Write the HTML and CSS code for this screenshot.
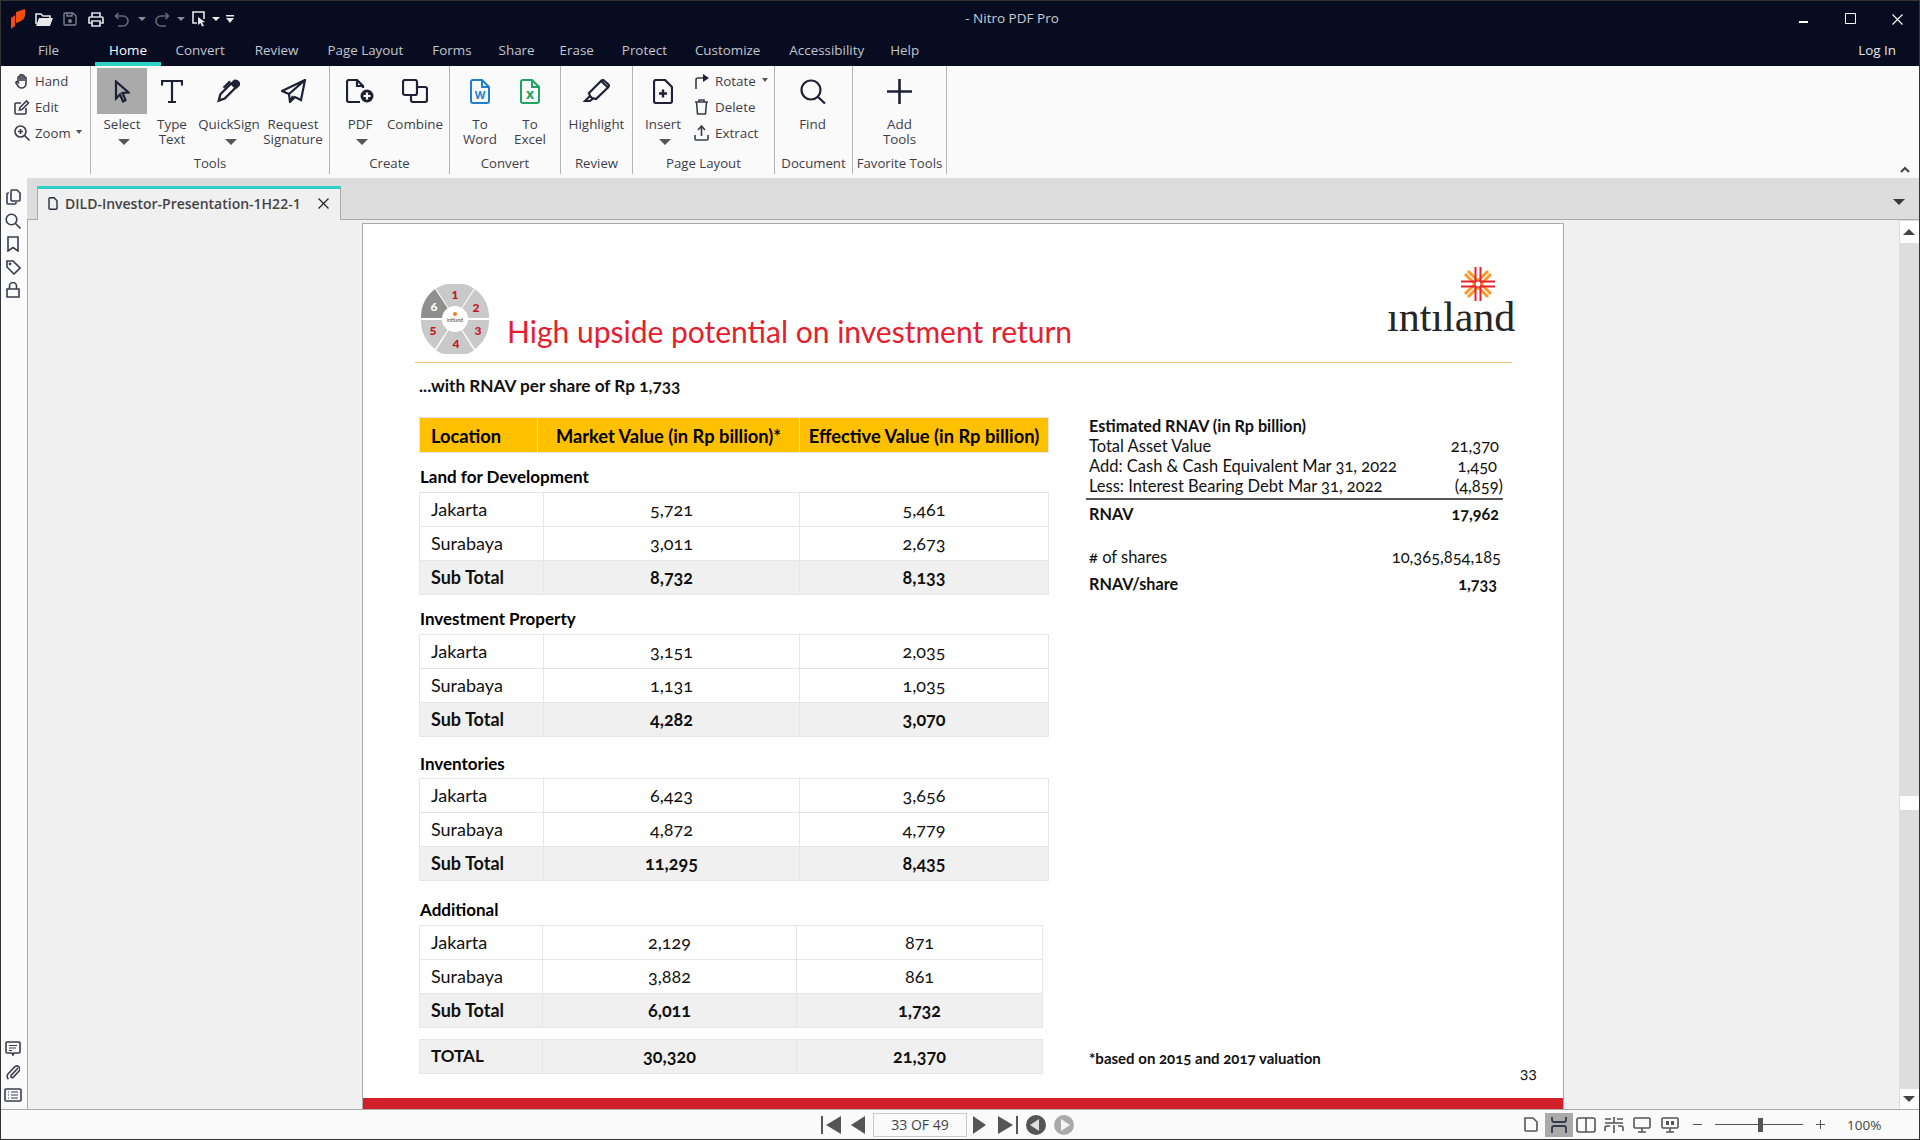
FILE: index.html
```html
<!DOCTYPE html>
<html lang="en">
<head>
<meta charset="utf-8">
<title>Nitro PDF Pro</title>
<link rel="stylesheet" href="styles.css">
</head>
<body>
<div class="app">
  <header class="titlebar">
    <div class="qat">
      <svg width="15" height="20" viewBox="0 0 15 20"><path fill="#f04e12" d="M0 9l4-3v11l-4 3zM5 3l9-3c1 6 0 11-6 13l-3 1z"/></svg>
      <svg width="18" height="14" viewBox="0 0 18 14" fill="none"><path d="M1 12V2h5l2 2h7v2" stroke="#e8e8ea" stroke-width="1.6"/><path d="M4 6h14l-3 8H1z" fill="#e8e8ea"/></svg>
      <svg width="14" height="14" viewBox="0 0 14 14" fill="none" stroke="#7c7f8a" stroke-width="1.4"><path d="M1 2a1 1 0 0 1 1-1h8l3 3v8a1 1 0 0 1-1 1H2a1 1 0 0 1-1-1z"/><path d="M4 1v3h5V1"/><circle cx="7" cy="9" r="1.2" fill="#7c7f8a"/></svg>
      <svg width="16" height="15" viewBox="0 0 16 15" fill="none" stroke="#dcdce0" stroke-width="1.7"><path d="M4 5V1h8v4M4 11H1V6a1 1 0 0 1 1-1h12a1 1 0 0 1 1 1v5h-3"/><path d="M4 9h8v5H4z"/></svg>
      <svg width="15" height="15" viewBox="0 0 15 15" fill="none" stroke="#666a76" stroke-width="1.6"><path d="M4 14h5a5 5 0 0 0 0-10H2M4.500 1L1.500 4l3 3"/></svg>
      <span class="caret caret-gray"></span>
      <svg width="15" height="15" viewBox="0 0 15 15" fill="none" stroke="#666a76" stroke-width="1.6"><path d="M11 14H6A5 5 0 0 1 6 4h7M10.500 1l3 3-3 3"/></svg>
      <span class="caret caret-gray"></span>
      <svg width="14" height="16" viewBox="0 0 14 16" fill="none"><path d="M12 8V1H1v11h4" stroke="#e8e8ea" stroke-width="1.6"/><path d="M6 6l7 5-3 .5 2 3.500-2 .5-1.500-3.500L6 14z" fill="#e8e8ea"/></svg>
      <span class="caret caret-white"></span>
      <svg width="8" height="8" viewBox="0 0 8 8"><path d="M0 0h8v1.500H0zM0 3h8L4 8z" fill="#e8e8ea"/></svg>
    </div>
    <div class="app-title">- Nitro PDF Pro</div>
    <div class="winctl">
      <svg width="9" height="3" viewBox="0 0 9 3"><path d="M0 1h9v2H0z" fill="#fff"/></svg>
      <svg width="12" height="12" viewBox="0 0 12 12" fill="none"><path d="M.5.500h10v10H.5z" stroke="#fff"/></svg>
      <svg width="11" height="11" viewBox="0 0 11 11" fill="none"><path d="M.5.500l10 10M10.500.500l-10 10" stroke="#fff" stroke-width="1.100"/></svg>
    </div>
  </header>

  <nav class="menubar">
    <a class="menu menu-file">File</a>
    <a class="menu menu-on">Home</a>
    <a class="menu">Convert</a>
    <a class="menu">Review</a>
    <a class="menu">Page Layout</a>
    <a class="menu">Forms</a>
    <a class="menu">Share</a>
    <a class="menu">Erase</a>
    <a class="menu">Protect</a>
    <a class="menu">Customize</a>
    <a class="menu">Accessibility</a>
    <a class="menu">Help</a>
    <a class="menu menu-login">Log In</a>
  </nav>

  <section class="ribbon">
    <div class="group group-nav">
      <div class="small"><svg width="16" height="16" viewBox="0 0 16 16" class="ic ic-thin"><path d="M4 9V4.500a1 1 0 0 1 2 0V8M6 8V2.500a1 1 0 0 1 2 0V8M8 8V3a1 1 0 0 1 2 0v5M10 8V5a1 1 0 0 1 2 0v5.500c0 2.500-2 4.500-4.500 4.500-2.300 0-3.500-1.500-4.500-3.500L2 10c-.5-1 1-2 1.800-1L5 10.500"/></svg><span>Hand</span></div>
      <div class="small"><svg width="16" height="16" viewBox="0 0 16 16" class="ic ic-thin"><path d="M12 9v5a1 1 0 0 1-1 1H2a1 1 0 0 1-1-1V5a1 1 0 0 1 1-1h5"/><path d="M6 8.500L12.500 2l2 2L8 10.500l-2.500.500z"/></svg><span>Edit</span></div>
      <div class="small"><svg width="16" height="16" viewBox="0 0 16 16" class="ic ic-thin"><circle cx="6.500" cy="6.500" r="5.500"/><path d="M10.500 10.500l5 5M6.500 4v5M4 6.500h5"/></svg><span>Zoom</span><span class="caret caret-dark caret-zoom"></span></div>
    </div>

    <div class="group group-tools">
      <div class="tools">
        <div class="tool w50 tool-on"><div class="tool-ic"><svg width="16" height="23" viewBox="0 0 16 23" class="ic"><path d="M2 1.500l12.500 11-6 .5 3 7-2.500 1.500-3-7L2 18.500z"/></svg></div><div class="lbl">Select</div><span class="caret caret-big"></span></div>
        <div class="tool w50"><div class="tool-ic"><svg width="22" height="23" viewBox="0 0 22 23" class="ic"><path d="M1 5.500V1h20v4.500M11 1v21M7 22h8"/></svg></div><div class="lbl">Type<br>Text</div></div>
        <div class="tool w64"><div class="tool-ic"><svg width="28" height="26" viewBox="0 0 26 24" class="ic"><path d="M5 15L15 5l4 4L9 19l-5.500 2z"/><path d="M14 3L8 9"/><path d="M17 3.500a3 3 0 0 1 5 3l-2 2-4-3z" fill="#1e2135"/></svg></div><div class="lbl">QuickSign</div><span class="caret caret-big"></span></div>
        <div class="tool w64"><div class="tool-ic"><svg width="25" height="24" viewBox="0 0 25 24" class="ic"><path d="M24 1L1 12l7 3 1 8 5-5 6 3zM24 1L8 15M9 23l3-6"/></svg></div><div class="lbl">Request<br>Signature</div></div>
      </div>
      <div class="group-lbl">Tools</div>
    </div>

    <div class="group group-create">
      <div class="tools">
        <div class="tool w60"><div class="tool-ic"><svg width="28" height="24" viewBox="0 0 28 24" class="ic"><path d="M17 9V7l-6-6H3a2 2 0 0 0-2 2v18a2 2 0 0 0 2 2h11M11 1v6h6"/><circle cx="21" cy="17" r="6.500" fill="#1e2135" stroke="none"/><path d="M21 13.500v7M17.500 17h7" stroke="#fff"/></svg></div><div class="lbl">PDF</div><span class="caret caret-big"></span></div>
        <div class="tool w50"><div class="tool-ic"><svg width="26" height="24" viewBox="0 0 26 24" class="ic"><path d="M3 1h10a2 2 0 0 1 2 2v5h8a2 2 0 0 1 2 2v11a2 2 0 0 1-2 2H11a2 2 0 0 1-2-2v-5H3a2 2 0 0 1-2-2V3a2 2 0 0 1 2-2zM15 8v6a2 2 0 0 1-2 2H9"/></svg></div><div class="lbl">Combine</div></div>
      </div>
      <div class="group-lbl">Create</div>
    </div>

    <div class="group group-convert">
      <div class="tools">
        <div class="tool w50"><div class="tool-ic"><svg width="20" height="25" viewBox="0 0 20 25" fill="none"><path d="M12 1H3a2 2 0 0 0-2 2v19a2 2 0 0 0 2 2h14a2 2 0 0 0 2-2V8zM12 1v7h7" stroke="#1d7fd0" stroke-width="2"/><text x="10" y="20" class="doc-letter doc-word">W</text></svg></div><div class="lbl">To<br>Word</div></div>
        <div class="tool w50"><div class="tool-ic"><svg width="20" height="25" viewBox="0 0 20 25" fill="none"><path d="M12 1H3a2 2 0 0 0-2 2v19a2 2 0 0 0 2 2h14a2 2 0 0 0 2-2V8zM12 1v7h7" stroke="#1ea362" stroke-width="2"/><text x="10" y="20" class="doc-letter doc-excel">x</text></svg></div><div class="lbl">To<br>Excel</div></div>
      </div>
      <div class="group-lbl">Convert</div>
    </div>

    <div class="group group-review">
      <div class="tools">
        <div class="tool wfull"><div class="tool-ic"><svg width="27" height="24" viewBox="0 0 27 24" class="ic"><path d="M6 14L18 2a2.500 2.500 0 0 1 3.500 0L25 5a2.500 2.500 0 0 1 0 3.500L13 20l-4-1-2-2z"/><path d="M7 17l-5 5h5l3-2.500"/><path d="M18 2l7 6.500"/></svg></div><div class="lbl">Highlight</div></div>
      </div>
      <div class="group-lbl">Review</div>
    </div>

    <div class="group group-layout">
      <div class="tools">
        <div class="tool w50"><div class="tool-ic"><svg width="20" height="25" viewBox="0 0 20 25" class="ic"><path d="M12 1H3a2 2 0 0 0-2 2v19a2 2 0 0 0 2 2h14a2 2 0 0 0 2-2V8z"/><path d="M10 10.500v8M6 14.500h8" stroke-width="2.400"/></svg></div><div class="lbl">Insert</div><span class="caret caret-big"></span></div>
        <div class="small-col">
          <div class="small"><svg width="15" height="15" viewBox="0 0 15 15" class="ic ic-thin"><path d="M2 15V6a2 2 0 0 1 2-2h6"/><path d="M9 0l6 4-6 4z" fill="#1e2135" stroke="none"/></svg><span>Rotate</span><span class="caret caret-dark caret-rot"></span></div>
          <div class="small"><svg width="15" height="16" viewBox="0 0 15 16" class="ic ic-thin"><path d="M1 3h13M5 3V1h5v2M2.500 3l1 12h8l1-12"/></svg><span>Delete</span></div>
          <div class="small"><svg width="15" height="16" viewBox="0 0 15 16" class="ic ic-thin"><path d="M7.500 11V2M4 5l3.500-4L11 5M1 10v4a1 1 0 0 0 1 1h11a1 1 0 0 0 1-1v-4"/></svg><span>Extract</span></div>
        </div>
      </div>
      <div class="group-lbl">Page Layout</div>
    </div>

    <div class="group group-doc">
      <div class="tools">
        <div class="tool wfull tool-find"><div class="tool-ic"><svg width="26" height="25" viewBox="0 0 26 25" class="ic"><circle cx="11" cy="11" r="9.500"/><path d="M18 18l7 6.500"/></svg></div><div class="lbl">Find</div></div>
      </div>
      <div class="group-lbl">Document</div>
    </div>

    <div class="group group-fav">
      <div class="tools">
        <div class="tool wfull"><div class="tool-ic"><svg width="25" height="25" viewBox="0 0 25 25" class="ic ic-thick"><path d="M12.500 0v25M0 12.500h25"/></svg></div><div class="lbl">Add<br>Tools</div></div>
      </div>
      <div class="group-lbl">Favorite Tools</div>
    </div>

    <svg class="collapse" width="10" height="7" viewBox="0 0 10 7" fill="none"><path d="M1 6l4-4 4 4" stroke="#444" stroke-width="2"/></svg>
  </section>

  <div class="workspace">
    <aside class="sidebar">
      <div class="side-top">
        <svg width="15" height="16" viewBox="0 0 15 16" class="ic ic-side"><path d="M5 11V2a1 1 0 0 1 1-1h5l3 3v7a1 1 0 0 1-1 1H6a1 1 0 0 1-1-1z"/><path d="M3 4H2a1 1 0 0 0-1 1v9a1 1 0 0 0 1 1h7a1 1 0 0 0 1-1v-1"/></svg>
        <svg width="16" height="16" viewBox="0 0 16 16" class="ic ic-side"><circle cx="6.500" cy="6.500" r="5.300"/><path d="M10.500 10.500l5 5"/></svg>
        <svg width="12" height="16" viewBox="0 0 12 16" class="ic ic-side"><path d="M1 1h10v14l-5-3.500L1 15z"/></svg>
        <svg width="15" height="15" viewBox="0 0 15 15" class="ic ic-side"><path d="M1 1h6l7 7-6 6-7-7z"/><circle cx="4" cy="4" r=".6"/></svg>
        <svg width="14" height="16" viewBox="0 0 14 16" class="ic ic-side"><path d="M1 7h12v8H1zM3.500 7V4a3.500 3.500 0 0 1 7 0v3"/></svg>
      </div>
      <div class="side-bottom">
        <svg width="16" height="15" viewBox="0 0 16 15" class="ic ic-side"><path d="M2 1h12a1 1 0 0 1 1 1v9a1 1 0 0 1-1 1H9l-1 2-1-2H2a1 1 0 0 1-1-1V2a1 1 0 0 1 1-1z"/><path d="M4 4.500h8M4 7h7M4 9.500h3" stroke-width="1.100"/></svg>
        <svg width="14" height="16" viewBox="0 0 14 16" class="ic ic-side"><path d="M12 4L5 11.500a1.500 1.500 0 0 0 2 2L13 7a3 3 0 0 0-4.500-4L2 10a3.500 3.500 0 0 0 .5 5"/></svg>
        <svg width="18" height="14" viewBox="0 0 18 14" class="ic ic-side"><path d="M2 1h14a1 1 0 0 1 1 1v10a1 1 0 0 1-1 1H2a1 1 0 0 1-1-1V2a1 1 0 0 1 1-1z"/><path d="M4 4h1M4 7h1M4 10h1M7 4h7M7 7h7M7 10h7" stroke-width="1.200"/></svg>
      </div>
    </aside>

    <div class="viewer">
      <div class="tabstrip">
        <div class="tab">
          <svg width="10" height="13" viewBox="0 0 10 13" class="ic ic-tab"><path d="M6 .700H2a1 1 0 0 0-1 1v9.600a1 1 0 0 0 1 1h6a1 1 0 0 0 1-1V3.700z"/></svg>
          <span class="tab-name">DILD-Investor-Presentation-1H22-1</span>
          <svg class="tab-x" width="11" height="11" viewBox="0 0 11 11" fill="none"><path d="M.5.500l10 10M10.500.500l-10 10" stroke="#222" stroke-width="1.200"/></svg>
        </div>
        <span class="caret caret-strip"></span>
      </div>

      <div class="docrow">
        <main class="docarea">
          <article class="page">
            <div class="page-head">
              <svg class="wheel" width="68" height="70" viewBox="0 0 68 70">
                <g fill="#c9c9c9">
                  <path d="M34 34L53 4.500A35 35 0 0 0 15 4.500z"/>
                  <path d="M35 34L54 5A36 36 0 0 1 68 34z"/>
                  <path d="M35 36H68A36 36 0 0 1 54 65z"/>
                  <path d="M34 36L53 66.500A36 36 0 0 1 15 66.500z"/>
                  <path d="M33 36H0A36 36 0 0 0 14 65z"/>
                  <path d="M33 34L14 5A36 36 0 0 0 0 34z" fill="#8f8f8f"/>
                </g>
                <circle cx="34" cy="35" r="13" fill="#fff"/>
                <circle cx="34" cy="30" r="2" fill="#f07c22"/>
                <text x="34" y="38" class="w-mini">intiland</text>
                <text x="34" y="15" class="w-num">1</text>
                <text x="55" y="28" class="w-num">2</text>
                <text x="57" y="51" class="w-num">3</text>
                <text x="35" y="64" class="w-num">4</text>
                <text x="12" y="51" class="w-num">5</text>
                <text x="13" y="27" class="w-num w-six">6</text>
              </svg>
              <h1 class="doc-title">High upside potential on investment return</h1>
              <div class="brand">
                <svg class="star" width="34" height="34" viewBox="0 0 34 34" fill="none">
                  <g stroke="#f79a2a" stroke-width="3">
                    <path d="M4 7l23 23M7 4l23 23M4 27L27 4M7 30L30 7"/>
                  </g>
                  <g stroke="#e32430" stroke-width="2">
                    <path d="M14.500 0v34M19.500 0v34M0 14.500h34M0 19.500h34"/>
                  </g>
                  <circle cx="17" cy="17" r="2.500" fill="#fff"/>
                </svg>
                <div class="brand-name">ıntıland</div>
              </div>
            </div>

            <p class="lead">...with RNAV per share of Rp 1,733</p>

            <div class="cols">
              <div class="col-left">
                <table class="tb tb-head">
                  <colgroup><col class="c-h1"><col class="c-h2"><col class="c-h3"></colgroup>
                  <tr><th class="th-loc">Location</th><th>Market Value (in Rp billion)*</th><th>Effective Value (in Rp billion)</th></tr>
                </table>

                <div class="sect sect-a">Land for Development</div>
                <table class="tb">
                  <colgroup><col class="c-a1"><col class="c-a2"><col class="c-a3"></colgroup>
                  <tr><td>Jakarta</td><td>5,721</td><td>5,461</td></tr>
                  <tr><td>Surabaya</td><td>3,011</td><td>2,673</td></tr>
                  <tr class="sub"><td>Sub Total</td><td>8,732</td><td>8,133</td></tr>
                </table>

                <div class="sect sect-a">Investment Property</div>
                <table class="tb">
                  <colgroup><col class="c-a1"><col class="c-a2"><col class="c-a3"></colgroup>
                  <tr><td>Jakarta</td><td>3,151</td><td>2,035</td></tr>
                  <tr><td>Surabaya</td><td>1,131</td><td>1,035</td></tr>
                  <tr class="sub"><td>Sub Total</td><td>4,282</td><td>3,070</td></tr>
                </table>

                <div class="sect sect-b">Inventories</div>
                <table class="tb">
                  <colgroup><col class="c-a1"><col class="c-a2"><col class="c-a3"></colgroup>
                  <tr><td>Jakarta</td><td>6,423</td><td>3,656</td></tr>
                  <tr><td>Surabaya</td><td>4,872</td><td>4,779</td></tr>
                  <tr class="sub"><td>Sub Total</td><td>11,295</td><td>8,435</td></tr>
                </table>

                <div class="sect sect-c">Additional</div>
                <table class="tb tb-narrow">
                  <colgroup><col class="c-b1"><col class="c-b2"><col class="c-b3"></colgroup>
                  <tr><td>Jakarta</td><td>2,129</td><td>871</td></tr>
                  <tr><td>Surabaya</td><td>3,882</td><td>861</td></tr>
                  <tr class="sub"><td>Sub Total</td><td>6,011</td><td>1,732</td></tr>
                </table>

                <table class="tb tb-narrow tb-total">
                  <colgroup><col class="c-b1"><col class="c-b2"><col class="c-b3"></colgroup>
                  <tr class="sub total-row"><td>TOTAL</td><td>30,320</td><td>21,370</td></tr>
                </table>
              </div>

              <div class="col-right">
                <div class="kv kv-b">Estimated RNAV (in Rp billion)</div>
                <div class="kv"><span>Total Asset Value</span><span>21,370</span></div>
                <div class="kv"><span>Add: Cash &amp; Cash Equivalent Mar 31, 2022</span><span class="v-in">1,450</span></div>
                <div class="kv"><span>Less: Interest Bearing Debt Mar 31, 2022</span><span class="v-out">(4,859)</span></div>
                <div class="rule"></div>
                <div class="kv kv-b"><span>RNAV</span><span>17,962</span></div>
                <div class="kv kv-shares"><span># of shares</span><span class="v-sh">10,365,854,185</span></div>
                <div class="kv kv-b kv-per"><span>RNAV/share</span><span class="v-in">1,733</span></div>
                <div class="footnote">*based on 2015 and 2017 valuation</div>
                <div class="pageno">33</div>
              </div>
            </div>

            <div class="redband"></div>
          </article>
        </main>

        <div class="scrollbar">
          <div class="sb-btn sb-up"><span class="sb-tri-up"></span></div>
          <div class="sb-thumb"></div>
          <div class="sb-btn sb-down"><span class="caret sb-tri-down"></span></div>
        </div>
      </div>
    </div>
  </div>

  <footer class="status">
    <div class="nav">
      <svg class="st" width="20" height="18" viewBox="0 0 20 18"><path d="M0 0h2v18H0zM20 0v18L5 9z" fill="#555"/></svg>
      <svg class="st st-prev" width="14" height="18" viewBox="0 0 14 18"><path d="M14 0v18L0 9z" fill="#555"/></svg>
      <div class="pagebox">33 OF 49</div>
      <svg class="st st-next" width="13" height="18" viewBox="0 0 13 18"><path d="M0 0v18L13 9z" fill="#555"/></svg>
      <svg class="st st-last" width="20" height="18" viewBox="0 0 20 18"><path d="M0 0v18L15 9zM18 0h2v18h-2z" fill="#555"/></svg>
      <svg class="st st-back" width="20" height="20" viewBox="0 0 20 20"><circle cx="10" cy="10" r="10" fill="#555"/><path d="M13 4v12L4 10z" fill="#ddd"/></svg>
      <svg class="st st-fwd" width="20" height="20" viewBox="0 0 20 20"><circle cx="10" cy="10" r="10" fill="#aaa"/><path d="M7 4v12l9-6z" fill="#f4f4f4"/></svg>
    </div>
    <div class="views">
      <svg class="v-ic" width="14" height="15" viewBox="0 0 14 15" fill="none"><path d="M1 1h8l4 4v8a1 1 0 0 1-1 1H2a1 1 0 0 1-1-1z" stroke="#555" stroke-width="1.600"/></svg>
      <div class="v-sel"><svg width="16" height="16" viewBox="0 0 16 16" fill="none"><path d="M1 0v3a2 2 0 0 0 2 2h10a2 2 0 0 0 2-2V0M1 16v-5a2 2 0 0 1 2-2h10a2 2 0 0 1 2 2v5" stroke="#333a4a" stroke-width="1.800"/></svg></div>
      <svg class="v-ic v-two" width="20" height="16" viewBox="0 0 20 16" fill="none"><path d="M3 1h14a2 2 0 0 1 2 2v10a2 2 0 0 1-2 2H3a2 2 0 0 1-2-2V3a2 2 0 0 1 2-2zM10 1v14" stroke="#555" stroke-width="1.600"/></svg>
      <svg class="v-ic v-four" width="20" height="16" viewBox="0 0 20 16" fill="none"><path d="M1 2h6M13 2h6M10 0v6M1 6h18M1 14v-3a2 2 0 0 1 2-2h3M19 14v-3a2 2 0 0 0-2-2h-3M10 8v8" stroke="#555" stroke-width="1.600"/></svg>
      <svg class="v-ic v-mon" width="18" height="16" viewBox="0 0 18 16" fill="none"><path d="M2 1h14a1 1 0 0 1 1 1v8a1 1 0 0 1-1 1H2a1 1 0 0 1-1-1V2a1 1 0 0 1 1-1zM9 11v4M5 15h8" stroke="#555" stroke-width="1.600"/></svg>
      <svg class="v-ic v-mon2" width="18" height="16" viewBox="0 0 18 16" fill="none"><path d="M2 1h14a1 1 0 0 1 1 1v8a1 1 0 0 1-1 1H2a1 1 0 0 1-1-1V2a1 1 0 0 1 1-1zM9 11v4M5 15h8" stroke="#555" stroke-width="1.600"/><path d="M5 4h3v4H5zM10 4h3v4h-3z" fill="#555"/></svg>
      <span class="zoom-minus"></span>
      <div class="slider"><span class="slider-thumb"></span></div>
      <svg class="zoom-plus" width="9" height="9" viewBox="0 0 9 9"><path d="M4 0h1v9H4zM0 4h9v1H0z" fill="#555"/></svg>
      <span class="pct">100%</span>
    </div>
  </footer>
</div>
</body>
</html>
```

FILE: styles.css
```css
* { box-sizing: border-box; }
html, body { margin: 0; padding: 0; }
body { width: 1920px; height: 1140px; overflow: hidden; font-family: "Open Sans", "Noto Sans", sans-serif; font-size: 13.400px; color: #3e3e48; }
.app { width: 1920px; height: 1140px; display: flex; flex-direction: column; background: #fafafa; border: 1px solid #333; }

.titlebar { height: 36px; flex: none; display: flex; align-items: center; background: #080c20; }
.qat { width: 239px; padding-left: 5px; display: grid; grid-template-columns: 24px 28px 24px 28px 22px 20px 20px 17px 20px 13px 15px; align-items: center; justify-items: center; flex: none; }
.app-title { flex: 1; text-align: center; color: #c8ccd4; font-size: 13.500px; line-height: 18px; padding-bottom: 3px; }
.winctl { width: 135px; flex: none; display: flex; align-items: center; padding-left: 15px; }
.winctl svg:nth-child(1) { margin-top: 5px; }
.winctl svg:nth-child(2) { margin-left: 37px; }
.winctl svg:nth-child(3) { margin-left: 35px; }

.caret { display: inline-block; width: 0; height: 0; border-left: 4px solid transparent; border-right: 4px solid transparent; border-top: 4px solid #888; }
.caret-gray { border-top-color: #8a8c94; }
.caret-white { border-top-color: #eee; }
.caret-dark { border-left-width: 3.500px; border-right-width: 3.500px; border-top-color: #555; }
.caret-big { margin: 7px 0 0 3px; border-left-width: 6px; border-right-width: 6px; border-top: 6px solid #555; }
.caret-zoom { margin-bottom: 3px; }
.caret-rot { margin-bottom: 3px; }

.menubar { height: 29px; flex: none; display: flex; background: #080c20; padding-left: 23px; }
.menu { height: 29px; padding: 3px 14.500px 0; line-height: 20px; color: #c2c6ce; font-size: 13.400px; white-space: nowrap; }
.menu-file { width: 49px; padding: 3px 0 0; text-align: center; margin-right: 22px; }
.menu-on { color: #fff; width: 66px; text-align: center; padding: 3px 0 0; border-bottom: 4px solid #2fd0c8; border-radius: 3px 3px 0 0; }
.menu:nth-child(3) { margin-right: 1px; }
.menu:nth-child(6) { margin-right: -2px; }
.menu:nth-child(7) { margin-right: -4px; }
.menu:nth-child(8) { margin-right: -1px; }
.menu:nth-child(9) { margin-right: -1px; }
.menu:nth-child(11) { margin-right: -3px; }
.menu-login { margin-left: auto; padding-right: 23px; color: #e4e6ea; }

.ribbon { height: 112px; flex: none; display: flex; background: #fafafa; }
.group { height: 108px; border-right: 1px solid #b4b4b4; display: flex; flex-direction: column; flex: none; }
.group-nav { width: 90px; padding-top: 2px; }
.group-nav .small { padding-left: 13px; gap: 5px; font-size: 13.200px; }
.group-tools { width: 239px; }
.group-create { width: 120px; }
.group-convert { width: 111px; }
.group-review { width: 72px; }
.group-layout { width: 142px; }
.group-doc { width: 78px; }
.group-fav { width: 94px; }
.tools { flex: 1; display: flex; padding-top: 2px; }
.group-tools .tools { padding-left: 6px; }
.group-convert .tools, .group-layout .tools { padding-left: 5px; }
.tool { display: flex; flex-direction: column; align-items: center; flex: none; }
.tool-find { padding-right: 2px; }
.w50 { width: 50px; }
.w60 { width: 60px; }
.w64 { width: 64px; }
.wfull { width: 100%; }
.tool-ic { width: 50px; height: 46px; display: flex; align-items: center; justify-content: center; }
.tool-on .tool-ic { background: #aaa; }
.lbl { padding-top: 3px; line-height: 15px; text-align: center; white-space: nowrap; }
.group-lbl { height: 18px; line-height: 15px; text-align: center; font-size: 13.200px; white-space: nowrap; }
.small { height: 26px; display: flex; align-items: center; gap: 6px; white-space: nowrap; }
.small svg { flex: none; }
.small-col { padding-left: 6px; }
.ic { fill: none; stroke: #1e2135; stroke-width: 2.200; }
.ic-thin { stroke: #3a3d4c; stroke-width: 1.600; }
.ic-thick { stroke-width: 2.600; }
.ic-side { stroke: #3a3d50; stroke-width: 1.600; }
.ic-tab { stroke: #2a2d3e; stroke-width: 1.400; flex: none; }
.doc-letter { font-family: "Open Sans", sans-serif; font-weight: 700; text-anchor: middle; }
.doc-word { font-size: 11px; fill: #1d7fd0; }
.doc-excel { font-size: 14px; fill: #1ea362; }
.collapse { margin: auto 9px 5px auto; flex: none; }

.workspace { flex: 1; display: flex; min-height: 0; }
.sidebar { width: 26px; flex: none; display: flex; flex-direction: column; justify-content: space-between; align-items: center; background: #fafafa; padding: 11px 2px 7px 0; }
.side-top { display: flex; flex-direction: column; align-items: center; gap: 7.500px; }
.side-bottom { display: flex; flex-direction: column; align-items: center; gap: 8px; }

.viewer { flex: 1; min-width: 0; display: flex; flex-direction: column; }
.tabstrip { height: 42px; flex: none; display: flex; background: #ddd; border-bottom: 1px solid #aaa; padding-left: 10px; }
.tab { width: 304px; height: 34px; margin-top: 8px; background: #f0f0f0; border-top: 3px solid #2fd0c8; border-left: 1px solid #aaa; border-right: 1px solid #aaa; display: flex; align-items: center; padding: 0 0 3px 10px; }
.tab-name { margin-left: 7px; font-weight: 600; font-size: 14px; color: #444; white-space: nowrap; }
.tab-x { margin-left: auto; margin-right: 11px; }
.caret-strip { margin: 21px 14px 0 auto; border-left-width: 6px; border-right-width: 6px; border-top: 6px solid #3a3a3a; }

.docrow { flex: 1; display: flex; min-height: 0; }
.docarea { flex: 1; min-width: 0; background: #f0f0f0; border-left: 1px solid #aaa; padding: 3px 0 0 334px; display: flex; }
.page { width: 1202px; background: #fff; border: 1px solid #aaa; border-bottom: 0; display: flex; flex-direction: column; font-family: "Lato", "Open Sans", sans-serif; font-variant-numeric: oldstyle-nums; color: #111; }

.page-head { margin-left: 52px; width: 1097px; height: 139px; padding-top: 43px; padding-bottom: 8px; display: flex; border-bottom: 1px solid #fbc27e; }
.wheel { margin: 17px 0 0 6px; flex: none; }
.w-num { font-family: "Lato", sans-serif; font-weight: 900; font-size: 12px; fill: #c4161c; text-anchor: middle; font-variant-numeric: lining-nums; }
.w-six { fill: #fff; }
.w-mini { font-size: 5px; fill: #444; text-anchor: middle; }
.doc-title { margin: 46px 0 0 18px; font-weight: 400; font-size: 30px; line-height: 36px; color: #e5202e; white-space: nowrap; }
.brand { margin-left: auto; width: 125px; flex: none; }
.star { display: block; margin-left: 74px; }
.brand-name { font-family: "Liberation Serif", serif; font-size: 42px; line-height: 34px; color: #262626; white-space: nowrap; margin-top: -1px; }

.lead { margin: 11px 0 0 56px; font-weight: 700; font-size: 17.200px; line-height: 24px; white-space: nowrap; }
.cols { margin: 17px 0 0 56px; width: 1084px; display: flex; }
.col-left { padding-top: 2px; width: 630px; flex: none; }
.col-right { margin-left: 37px; width: 417px; flex: none; display: flex; flex-direction: column; padding-top: 1px; font-size: 16.500px; }

.tb { width: 629px; table-layout: fixed; border-collapse: collapse; font-size: 18px; }
.tb-narrow { width: 623px; }
.tb td, .tb th { height: 34px; border: 1px solid #e6e6e6; padding: 0 0 2px; text-align: center; white-space: nowrap; }
.tb td:first-child { text-align: left; padding-left: 11px; }
.tb-head th { height: 35px; background: #ffc000; font-weight: 700; font-size: 18.300px; color: #000; padding: 2px 0 0; }
.tb-head .th-loc { text-align: left; padding-left: 11px; }
.c-h1 { width: 118px; }
.c-h2 { width: 262px; }
.c-h3 { width: 249px; }
.c-a1 { width: 124px; }
.c-a2 { width: 256px; }
.c-a3 { width: 249px; }
.c-b1 { width: 123px; }
.c-b2 { width: 254px; }
.c-b3 { width: 246px; }
.sub td { background: #f0f0f0; font-weight: 700; }
.total-row td:first-child { font-size: 17px; }
.tb-total { margin-top: 11px; }
.sect { font-weight: 700; font-size: 17px; line-height: 20px; padding-bottom: 5px; padding-left: 1px; color: #000; white-space: nowrap; }
.sect-a { padding-top: 14px; }
.sect-b { padding-top: 17px; padding-bottom: 4px; }
.sect-c { padding-top: 19px; }

.kv { height: 20px; line-height: 20px; padding: 0 4px 0 3px; display: flex; justify-content: space-between; white-space: nowrap; }
.kv-b { font-weight: 700; font-size: 16.200px; }
.v-in { margin-right: 2px; }
.v-out { margin-right: -4px; }
.v-sh { margin-right: -2px; }
.rule { height: 2px; margin: 2px 0 4px; background: #555; }
.kv-shares { margin-top: 23px; }
.kv-per { margin-top: 7px; }
.footnote { margin-top: auto; padding-left: 3px; line-height: 20px; font-weight: 700; font-size: 15px; white-space: nowrap; }
.pageno { margin: -6px -34px -8px 0; text-align: right; line-height: 20px; font-size: 16px; }
.redband { margin-top: auto; height: 11px; flex: none; background: #d2202a; }

.scrollbar { width: 20px; flex: none; background: #ddd; display: flex; flex-direction: column; align-items: center; }
.sb-btn { width: 19px; flex: none; background: #fff; display: flex; align-items: center; justify-content: center; }
.sb-up { height: 22px; margin-top: 1px; }
.sb-down { height: 20px; margin-top: auto; }
.sb-tri-up { width: 0; height: 0; border-left: 6px solid transparent; border-right: 6px solid transparent; border-bottom: 6px solid #444; }
.sb-tri-down { border-left-width: 6px; border-right-width: 6px; border-top: 6px solid #444; }
.sb-thumb { width: 19px; height: 14px; margin-top: 553px; background: #fff; flex: none; }

.status { height: 30px; flex: none; display: flex; align-items: center; background: #fafafa; border-top: 1px solid #aaa; }
.nav { display: flex; align-items: center; margin-left: 820px; }
.st { flex: none; }
.st-prev { margin-left: 10px; }
.pagebox { width: 94px; height: 24px; margin-left: 8px; border: 1px solid #ccc; text-align: center; line-height: 22px; font-size: 14px; color: #444; background: #fafafa; }
.st-next { margin-left: 6px; }
.st-last { margin-left: 12px; }
.st-back { margin-left: 8px; }
.st-fwd { margin-left: 8px; }
.views { margin-left: auto; padding-right: 38px; display: flex; align-items: center; }
.v-ic { flex: none; }
.v-sel { width: 28px; height: 24px; margin-left: 7px; background: #aaa; display: flex; align-items: center; justify-content: center; }
.v-two { margin-left: 3px; }
.v-four { margin-left: 8px; }
.v-mon { margin-left: 9px; }
.v-mon2 { margin-left: 10px; }
.zoom-minus { width: 9px; height: 1px; margin-left: 14px; background: #555; }
.slider { width: 88px; height: 16px; margin-left: 13px; display: flex; align-items: center; padding-left: 43px; background: linear-gradient(#555, #555) center / 100% 1px no-repeat; }
.slider-thumb { width: 5px; height: 14px; background: #555; display: block; }
.zoom-plus { margin-left: 13px; flex: none; }
.pct { width: 34px; margin-left: 22px; color: #444; font-size: 13.500px; white-space: nowrap; }
```
